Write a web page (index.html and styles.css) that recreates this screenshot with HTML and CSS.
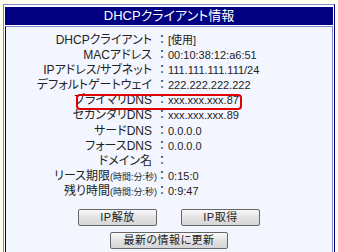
FILE: index.html
```html
<!DOCTYPE html>
<html lang="ja">
<head>
    <meta charset="UTF-8">
    <title>DHCPクライアント情報</title>
    <link rel="stylesheet" href="styles.css">
</head>
<body>
    <div class="panel">
        <div class="head">DHCPクライアント情報</div>
        <div class="body">
            <div class="rows">
                <div class="row"><span class="label">DHCPクライアント</span><span class="sep">：</span><span class="val">[使用]</span></div>
                <div class="row"><span class="label">MACアドレス</span><span class="sep">：</span><span class="val">00:10:38:12:a6:51</span></div>
                <div class="row"><span class="label">IPアドレス/サブネット</span><span class="sep">：</span><span class="val">111.111.111.111/24</span></div>
                <div class="row"><span class="label">デフォルトゲートウェイ</span><span class="sep">：</span><span class="val">222.222.222.222</span></div>
                <div class="row"><span class="mark"></span><span class="label">プライマリDNS</span><span class="sep">：</span><span class="val">xxx.xxx.xxx.87</span></div>
                <div class="row"><span class="label">セカンダリDNS</span><span class="sep">：</span><span class="val">xxx.xxx.xxx.89</span></div>
                <div class="row"><span class="label">サードDNS</span><span class="sep">：</span><span class="val">0.0.0.0</span></div>
                <div class="row"><span class="label">フォースDNS</span><span class="sep">：</span><span class="val">0.0.0.0</span></div>
                <div class="row"><span class="label">ドメイン名</span><span class="sep">：</span><span class="val"></span></div>
                <div class="row"><span class="label tight">リース期限<small>(時間:分:秒)</small></span><span class="sep">：</span><span class="val">0:15:0</span></div>
                <div class="row"><span class="label tight">残り時間<small>(時間:分:秒)</small></span><span class="sep">：</span><span class="val">0:9:47</span></div>
            </div>
            <div class="buttons">
                <div class="btn-row">
                    <button class="btn">IP解放</button>
                    <button class="btn">IP取得</button>
                </div>
                <div class="btn-row">
                    <button class="btn wide">最新の情報に更新</button>
                </div>
            </div>
        </div>
    </div>
</body>
</html>
```

FILE: styles.css
```css
body {
    margin: 0;
    padding: 4px 0 0 3px;
    background-color: #ffffee;
    font-family: "Liberation Sans", "Noto Sans CJK JP", sans-serif;
    font-feature-settings: "palt";
    color: #222;
}
.panel {
    width: 328px;
    height: 260px;
    padding: 2px 1px 1px 1px;
    background-color: #fff;
    border-top: 1px solid #8484c8;
    border-left: 1px solid #8484c8;
    border-right: 1px solid #000080;
    border-bottom: 1px solid #000080;
}
.head {
    height: 18px;
    line-height: 18px;
    background-color: #000080;
    color: #fff;
    font-size: 13px;
    text-align: center;
}
.body {
    margin-top: 1px;
    height: 240px;
    background-color: #f4f6ff;
    border-top: 1px solid #8484c8;
    border-left: 1px solid #000080;
    border-right: 1px solid #8484c8;
    padding-top: 6px;
}
.row {
    position: relative;
    display: flex;
    height: 15.1px;
    line-height: 15px;
    font-size: 12px;
    white-space: nowrap;
}
.label {
    box-sizing: border-box;
    width: 151px;
    padding-right: 5px;
    text-align: right;
}
.label.tight {
    padding-right: 0;
}
.label small {
    font-size: 9px;
}
.sep {
    width: 10px;
    text-align: center;
}
.val {
    margin-left: 1px;
    font-size: 11px;
}
.mark {
    position: absolute;
    left: 70px;
    top: 1px;
    width: 162px;
    height: 12px;
    border: 2px solid #e00000;
    border-radius: 4px;
}
.buttons {
    margin-top: 10px;
}
.btn-row {
    display: flex;
    justify-content: center;
    gap: 24px;
    margin-bottom: 6px;
}
.btn {
    display: block;
    width: 79px;
    height: 17px;
    padding: 0;
    line-height: 15px;
    border: 1px solid #666;
    border-radius: 2px;
    background: linear-gradient(#fafafa, #e2e2e2 50%, #d6d6d6);
    font-family: "Liberation Sans", "Noto Sans CJK JP", sans-serif;
    font-feature-settings: "palt";
    font-size: 11px;
    letter-spacing: 0.5px;
    color: #222;
}
.wide {
    width: 118px;
}
```
